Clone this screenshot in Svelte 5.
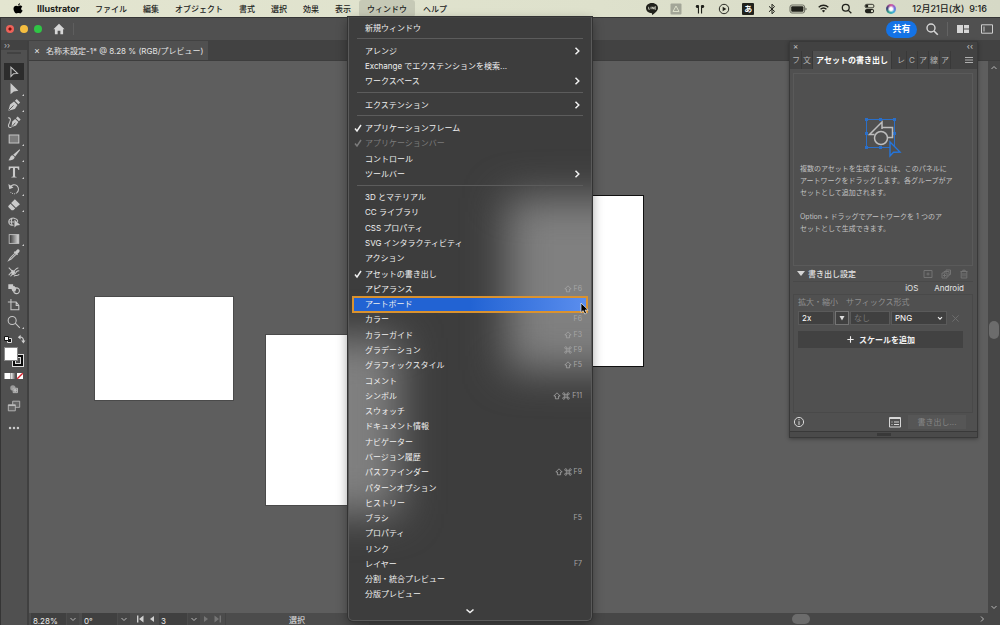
<script>
  const menuTitles = ['ファイル', '編集', 'オブジェクト', '書式', '選択', '効果', '表示', 'ウィンドウ', 'ヘルプ'];

  const groups = [
    [{ label: '新規ウィンドウ' }],
    [
      { label: 'アレンジ', sub: true },
      { label: 'Exchange でエクステンションを検索...' },
      { label: 'ワークスペース', sub: true },
    ],
    [{ label: 'エクステンション', sub: true }],
    [
      { label: 'アプリケーションフレーム', checked: true },
      { label: 'アプリケーションバー', checked: true, disabled: true },
      { label: 'コントロール' },
      { label: 'ツールバー', sub: true },
    ],
    [
      { label: '3D とマテリアル' },
      { label: 'CC ライブラリ' },
      { label: 'CSS プロパティ' },
      { label: 'SVG インタラクティビティ' },
      { label: 'アクション' },
      { label: 'アセットの書き出し', checked: true },
      { label: 'アピアランス', mods: ['shift'], key: 'F6' },
      { label: 'アートボード', active: true },
      { label: 'カラー', key: 'F6' },
      { label: 'カラーガイド', mods: ['shift'], key: 'F3' },
      { label: 'グラデーション', mods: ['cmd'], key: 'F9' },
      { label: 'グラフィックスタイル', mods: ['shift'], key: 'F5' },
      { label: 'コメント' },
      { label: 'シンボル', mods: ['shift', 'cmd'], key: 'F11' },
      { label: 'スウォッチ' },
      { label: 'ドキュメント情報' },
      { label: 'ナビゲーター' },
      { label: 'バージョン履歴' },
      { label: 'パスファインダー', mods: ['shift', 'cmd'], key: 'F9' },
      { label: 'パターンオプション' },
      { label: 'ヒストリー' },
      { label: 'ブラシ', key: 'F5' },
      { label: 'プロパティ' },
      { label: 'リンク' },
      { label: 'レイヤー', key: 'F7' },
      { label: '分割・統合プレビュー' },
      { label: '分版プレビュー' },
    ],
  ];

  const modPaths = {
    shift: 'M5 1 L9 5 H7 V8.5 H3 V5 H1 Z',
    cmd: 'M3.5 3.5 H6.5 V6.5 H3.5 Z M3.5 3.5 V2.2 A1.3 1.3 0 1 0 2.2 3.5 Z M6.5 3.5 V2.2 A1.3 1.3 0 1 1 7.8 3.5 Z M3.5 6.5 V7.8 A1.3 1.3 0 1 1 2.2 6.5 Z M6.5 6.5 V7.8 A1.3 1.3 0 1 0 7.8 6.5 Z',
  };

  // f = filled shape, s = stroked shape, on a 16 x 16 grid
  const tools = [
    { name: '選択', s: 'M4.5 2.5 V13 L7.5 10 L12 9.6 Z', selected: true },
    { name: 'ダイレクト選択', f: 'M4 1 V14 L7.8 10.8 L13 10 Z', more: true },
    { name: 'ペン', f: 'M1.5 14.5 L3.5 7.5 L8 4 L12 8 L9 12.5 Z M9 3.2 L11.2 1 L15 5 L13 7.2 Z', cut: 'M2 14 L7.5 8.5', more: true },
    { name: '曲線', f: 'M5 14 L6 7.5 L9.3 4.5 L13 8 L10.3 12 Z M10.2 3.6 L12.2 1.6 L15.6 5 L13.7 7 Z', s: 'M1.5 3 C5 3.5 4 6 3 8.5 C1 12 1 15 5 14', cut: 'M5.5 13.5 L9.5 8.8' },
    { name: '長方形', s: 'M2.5 3.5 H13.5 V12.5 H2.5 Z', box: true, more: true },
    { name: 'ブラシ', f: 'M14.4 1.4 L15 2.4 L9.4 9.8 L7 7.6 Z M6.4 8.2 L8.8 10.4 C8.4 13.6 5 14.6 1.4 14 C3.8 12.6 3 8.8 6.4 8.2 Z', more: true },
    { name: '文字', f: 'M2 1.8 H14 V5.6 H13 C12.6 3.7 12 3.4 9.2 3.4 V12.6 C9.2 13.4 9.7 13.6 11 13.6 V14.4 H5 V13.6 C6.3 13.6 6.8 13.4 6.8 12.6 V3.4 C4 3.4 3.4 3.7 3 5.6 H2 Z', more: true },
    { name: '回転', s: 'M3.5 6 C5 3 9 2.3 11.5 4.5 C14 7 13.5 10.5 11 12.5', dash: 'M11 12.5 C8.5 14.2 5 13.5 3.4 10.5', f: 'M1.6 2.4 L2.6 8.2 L7.4 6.2 Z', more: true },
    { name: '消しゴム', f: 'M9 1.5 L14.8 7 L10.2 11.2 L4.7 5.8 Z M4 6.6 L9.4 11.9 L7.2 14 H5.2 L1.5 10.4 V9 Z', more: true },
    { name: 'シェイプ形成', s: 'M2 8 C2 3.5 7 3 9 4 C12 4.5 12.5 7 12 8 M2 8 C2 11 5 12 7.5 11.6 M2 8 H8 M6 3.6 C4.5 6 4.8 9 6 11.6', f: 'M8.5 5 V14.4 L11 12 L15 11.4 Z' },
    { name: 'グラデーション', gradient: true, more: true },
    { name: 'スポイト', f: 'M9 4.5 L11.5 2 C13.2 0.6 15.4 2.8 14 4.5 L11.5 7 Z M7.6 4.8 L9 3.6 L12.6 7.2 L11.4 8.4 Z', s: 'M9 6 L3.6 11.4 L2 14.2 L4.8 12.6 L10.2 7.2' },
    { name: 'パペットワープ', s: 'M2 3 L6 7 M2 11.8 C5 7 7 8 8.5 6.5 C10 5 11 3 13 3.5 M4 13 C6 8.5 9 12 10 9 C11 7 13 6 14 7 M8 13 C9 10.5 12 13.5 14 10.5', f: 'M5.6 5.4 L9.6 7.6 L8 11 L4.4 9.4 Z' },
    { name: 'ブレンド', f: 'M1.5 2.5 H7 V8 H1.5 Z M4.6 6.5 L8 4.4 L10.8 7 L9.5 10.8 L6.2 10.6 Z', s: 'M14.2 10 A3.3 3.3 0 1 1 7.6 10 A3.3 3.3 0 1 1 14.2 10' },
    { name: 'アートボード', s: 'M4.5 1 V13.5 H13.5 V8.5 L10.5 4.5 H1 M10.5 4.5 V8.5 H13.5' },
    { name: 'ズーム', s: 'M10.5 6.3 A4.6 4.6 0 1 1 1.3 6.3 A4.6 4.6 0 1 1 10.5 6.3 M9.4 9.4 L14.6 14.6', more: true },
  ];

  let scale = $state('2x');
  let suffix = $state('');
  let format = $state('PNG');
  let zoom = $state('8.28%');
  let angle = $state('0°');
  let artboard = $state('3');
</script>

<svelte:head><title>Illustrator</title></svelte:head>

<div class="desktop">
  <header class="menubar">
    <svg class="apple" viewBox="0 0 12 13" aria-hidden="true">
      <path d="M8.4 0.3 C8.5 1.6 7.4 2.9 6.1 2.9 C6 1.6 7.1 0.4 8.4 0.3 Z M6.2 3.7 C6.8 3.7 7.6 3 8.7 3 C9.7 3 10.6 3.6 11.1 4.3 C9.1 5.4 9.4 8.3 11.5 9 C11 10.4 9.9 12.4 8.6 12.4 C7.7 12.4 7.4 11.9 6.3 11.9 C5.2 11.9 4.8 12.4 4 12.4 C2.4 12.4 0.6 9.2 0.6 6.8 C0.6 4.3 2.2 3.1 3.7 3.1 C4.8 3.1 5.5 3.7 6.2 3.7 Z" />
    </svg>
    <strong>Illustrator</strong>
    <nav>
      {#each menuTitles as title}
        <button class="title" class:open={title === 'ウィンドウ'}>{title}</button>
      {/each}
    </nav>
    <div class="extras">
      <svg viewBox="0 0 14 14"><path d="M7 1 C10.8 1 13 3.4 13 6 C13 8.8 9.6 11.5 7 13 V11.2 C3.4 11.2 1 9 1 6 C1 3.4 3.2 1 7 1 Z" /><path class="cut" d="M3.6 4.8 V7.2 H4.9 M6 4.8 V7.2 M7.2 7.2 V4.8 L8.7 7.2 V4.8 M11 4.8 H9.8 V7.2 H11 M9.8 6 H10.8" /></svg>
      <svg viewBox="0 0 14 14"><rect x="1.5" y="1.5" width="11" height="11" rx="1" fill="#a3a698" /><path d="M7 4 L10 9.5 H4 Z" fill="none" stroke="#dde0cb" /></svg>
      <svg viewBox="0 0 14 14"><path d="M3.4 3 H5 C6.2 3 6.3 4.2 6 5 V11.5 H4.9 V6 C3.4 6 2.7 5.4 2.7 4.5 Z M10.6 3 H9 C7.8 3 7.7 4.2 8 5 V11.5 H9.1 V6 C10.6 6 11.3 5.4 11.3 4.5 Z" /></svg>
      <svg viewBox="0 0 14 14"><circle cx="7" cy="7" r="4.7" fill="none" stroke="#2a2b25" /><path d="M5.7 4.8 L9.3 7 L5.7 9.2 Z" /></svg>
      <span class="ime"><b>あ</b></span>
      <svg viewBox="0 0 14 14"><path class="line" d="M4 4.3 L9.5 9.4 L7 11.8 V2.2 L9.5 4.7 L4 9.8" /></svg>
      <svg class="battery" viewBox="0 0 18 14"><rect x="1" y="3" width="14.6" height="8" rx="2" fill="none" stroke="#6c6e62" /><rect x="2.2" y="4.2" width="12.2" height="5.6" rx="1" /><path d="M16.6 5.6 V8.4 L17.6 7 Z" /></svg>
      <svg class="near" viewBox="0 0 14 14"><path class="line thick" d="M1.8 5.7 C4.8 2.8 9.2 2.8 12.2 5.7 M3.8 7.9 C5.7 6.2 8.3 6.2 10.2 7.9" /><path d="M5.3 9.4 C6.4 8.5 7.6 8.5 8.7 9.4 L7 11.2 Z" /></svg>
      <svg class="near" viewBox="0 0 14 14"><circle class="line thick" cx="6.2" cy="6.2" r="3.7" /><path class="line thick" d="M9 9 L12.2 12.2" /></svg>
      <svg class="near" viewBox="0 0 14 14"><rect x="2.2" y="2.5" width="9.6" height="3.8" rx="1.9" fill="none" stroke="#2a2b25" /><circle cx="4.2" cy="4.4" r="1.5" /><rect x="2" y="7.6" width="10" height="4.4" rx="2.2" /><circle cx="9.7" cy="9.8" r="1.3" fill="#dde0cb" /></svg>
      <span class="siri"></span>
      <time>12月21日(水)&nbsp; 9:16</time>
    </div>
  </header>

  <main class="app">
    <div class="appbar">
      <button class="light red" aria-label="閉じる"></button>
      <button class="light yellow" aria-label="しまう"></button>
      <button class="light green" aria-label="拡大"></button>
      <button class="home" aria-label="ホーム">
        <svg viewBox="0 0 14 14"><path d="M7 1 L13.5 7.4 H11.8 V13 H8.6 V9 H5.4 V13 H2.2 V7.4 H0.5 Z" /></svg>
      </button>
      <div class="appbar-right">
        <button class="share">共有</button>
        <button class="plain" aria-label="検索"><svg viewBox="0 0 14 14"><circle cx="6" cy="6" r="4" fill="none" stroke="#d6d6d6" stroke-width="1.4" /><path d="M9 9 L12.8 12.8" stroke="#d6d6d6" stroke-width="1.6" /></svg></button>
        <span class="divider"></span>
        <button class="plain" aria-label="ドキュメントの整列"><svg viewBox="0 0 14 14"><path d="M1 3 H7 V11 H1 Z M8 3 H13 V6.5 H8 Z M8 7.5 H13 V11 H8 Z" fill="#d6d6d6" /></svg></button>
        <button class="plain" aria-label="ワークスペース"><svg viewBox="0 0 14 14"><path d="M1.5 2.8 H12.5 V11.2 H1.5 Z" fill="none" stroke="#cfcfcf" /><path d="M3 4.5 H5 V9.5 H3 Z" fill="#8c8c8c" /></svg></button>
      </div>
    </div>

    <div class="work">
      <aside class="toolbar">
        <div class="collapse">››</div>
        <div class="grip"></div>
        <div class="tools">
          {#each tools as tool}
            <button class="tool" class:selected={tool.selected} class:more={tool.more} aria-label={tool.name}>
              <svg viewBox="0 0 16 16">
                {#if tool.gradient}
                  <defs><linearGradient id="ramp"><stop offset="0" stop-color="#333" /><stop offset="1" stop-color="#ddd" /></linearGradient></defs>
                  <rect x="2.5" y="3" width="11" height="10" fill="url(#ramp)" stroke="#c4c4c4" />
                {/if}
                {#if tool.f}<path class="f" d={tool.f} />{/if}
                {#if tool.s}<path class="s" class:box={tool.box} d={tool.s} />{/if}
                {#if tool.dash}<path class="s" stroke-dasharray="1 1.2" d={tool.dash} />{/if}
                {#if tool.cut}<path class="c" d={tool.cut} />{/if}
              </svg>
            </button>
          {/each}
        </div>
        <button class="swatches" aria-label="塗りと線">
          <svg viewBox="0 0 24 34">
            <path d="M5.5 4.5 H9.5 V8.5 H5.5 Z" fill="#111" stroke="#ddd" />
            <path d="M2.5 2.5 H6.5 V6.5 H2.5 Z" fill="#fff" stroke="#111" />
            <path d="M18 3 C20.5 3 21.5 4.5 21.5 7" fill="none" stroke="#ccc" stroke-width="1.2" /><path d="M15.8 3.2 L18.6 0.8 V5.6 Z M19.2 6.6 H23.4 L21.4 9.6 Z" fill="#ccc" />
            <rect x="10.5" y="20.5" width="11" height="12" fill="#0b0b0b" stroke="#ddd" />
            <rect x="13.5" y="23.5" width="5" height="6" fill="#4d4d4d" stroke="#ddd" />
            <rect x="2.5" y="13.5" width="13" height="13" fill="#fff" stroke="#888" />
          </svg>
        </button>
        <button class="modes" aria-label="カラーモード">
          <svg viewBox="0 0 20 8">
            <defs><linearGradient id="mode"><stop offset="0" stop-color="#eee" /><stop offset="1" stop-color="#444" /></linearGradient></defs>
            <rect x="0.5" y="1" width="6" height="6" fill="#fff" /><rect x="7" y="1" width="5" height="6" fill="url(#mode)" /><rect x="13" y="1" width="6" height="6" fill="#fff" /><path d="M13.2 6.8 L18.8 1.2" stroke="#d8202c" stroke-width="1.4" />
          </svg>
        </button>
        <button class="bottom-tool" aria-label="描画モード"><svg viewBox="0 0 16 16"><circle cx="6.7" cy="5.7" r="3" fill="#9a9a9a" /><path d="M7 6 H12 V11 H7 Z" fill="#777" stroke="#bbb" /><circle cx="9.4" cy="8.4" r="1.8" fill="#bbb" /></svg></button>
        <button class="bottom-tool screen" aria-label="スクリーンモード"><svg viewBox="0 0 16 16"><path d="M6.5 2.5 H14.5 V9.5 H6.5 Z" fill="#666" stroke="#bbb" /><path d="M1.5 6.5 H9.5 V13.5 H1.5 Z" fill="#666" stroke="#bbb" /><path d="M1.5 7.5 H9.5" stroke="#ccc" /></svg></button>
        <button class="bottom-tool dots" aria-label="ツールバーを編集"><svg viewBox="0 0 16 16"><circle cx="3.5" cy="8" r="1.4" /><circle cx="8" cy="8" r="1.4" /><circle cx="12.5" cy="8" r="1.4" /></svg></button>
      </aside>

      <section class="document">
        <div class="tabs">
          <button class="doc-tab"><span>×</span>名称未設定-1* @ 8.28 % (RGB/プレビュー)</button>
        </div>
        <div class="view">
          <div class="canvas">
            <div class="artboard one"></div>
            <div class="artboard two"></div>
            <div class="artboard three"></div>
          </div>
          <div class="vscroll">
            <svg viewBox="0 0 10 10"><path d="M2.5 6 L5 3.5 L7.5 6" /></svg>
            <span class="vthumb"></span>
            <svg viewBox="0 0 10 10"><path d="M2.5 4 L5 6.5 L7.5 4" /></svg>
          </div>
        </div>
        <footer class="status">
          <input class="zoom" aria-label="ズーム率" bind:value={zoom} />
          <button class="drop" aria-label="ズーム率を選択"><svg viewBox="0 0 10 10"><path d="M2.5 4 L5 6.5 L7.5 4" /></svg></button>
          <input class="angle" aria-label="回転角度" bind:value={angle} />
          <button class="drop" aria-label="角度を選択"><svg viewBox="0 0 10 10"><path d="M2.5 4 L5 6.5 L7.5 4" /></svg></button>
          <button class="step first" aria-label="最初"><svg viewBox="0 0 10 10"><path class="solid" d="M2 1.5 H3.4 V8.5 H2 Z M8.5 1.5 V8.5 L4 5 Z" /></svg></button>
          <button class="step" aria-label="前へ"><svg viewBox="0 0 10 10"><path class="solid" d="M7 2 V8 L3 5 Z" /></svg></button>
          <input class="number" aria-label="アートボード番号" bind:value={artboard} />
          <button class="drop" aria-label="アートボードを選択"><svg viewBox="0 0 10 10"><path d="M2.5 4 L5 6.5 L7.5 4" /></svg></button>
          <button class="step" aria-label="次へ" disabled><svg viewBox="0 0 10 10"><path class="solid" d="M3 2 V8 L7 5 Z" /></svg></button>
          <button class="step" aria-label="最後" disabled><svg viewBox="0 0 10 10"><path class="solid" d="M6.6 1.5 H8 V8.5 H6.6 Z M1.5 1.5 V8.5 L6 5 Z" /></svg></button>
          <span class="current">選択</span>
          <div class="hscroll"><span class="hthumb"></span><svg viewBox="0 0 10 10"><path d="M4 2.5 L6.5 5 L4 7.5" /></svg></div>
        </footer>
      </section>
    </div>
  </main>

  <section class="panel" aria-label="アセットの書き出し">
    <div class="panel-top"><button aria-label="閉じる">×</button><button aria-label="折りたたむ">‹‹</button></div>
    <div class="panel-tabs">
      <button>フ</button><button>文</button>
      <button class="current-tab">アセットの書き出し</button>
      <button>レ</button><button>C</button><button>ア</button><button>線</button><button>ア</button>
      <button class="burger" aria-label="パネルメニュー"><svg viewBox="0 0 10 10"><path d="M1 2.5 H9 M1 5 H9 M1 7.5 H9" /></svg></button>
    </div>
    <div class="drop-area">
      <svg viewBox="0 0 40 42" aria-hidden="true">
        <path d="M3.5 3.5 H31.5 V31.5 H3.5 Z" fill="none" stroke="#2a6fc9" />
        <path d="M2 2 h3 v3 h-3 Z M16 2 h3 v3 h-3 Z M30 2 h3 v3 h-3 Z M2 16 h3 v3 h-3 Z M30 16 h3 v3 h-3 Z M2 30 h3 v3 h-3 Z M16 30 h3 v3 h-3 Z" fill="#2a6fc9" />
        <path d="M19.5 11.5 H29.5 V21.5 H25 M11.5 18.5 H6.5 L19 6 V13" fill="none" stroke="#bdbdbd" stroke-width="1.5" />
        <circle cx="18" cy="22" r="6.5" fill="none" stroke="#bdbdbd" stroke-width="1.5" />
        <path d="M27 26 V40 L30.5 36.3 L37 36 Z" fill="#505050" stroke="#2476de" stroke-width="1.4" />
      </svg>
      <p>複数のアセットを生成するには、このパネルに<br />アートワークをドラッグします。各グループがア<br />セットとして追加されます。</p>
      <p>Option + ドラッグでアートワークを 1 つのア<br />セットとして生成できます。</p>
    </div>
    <div class="settings-title">
      <span class="twirl"></span>
      <span class="settings-name">書き出し設定</span>
      <svg viewBox="0 0 10 10"><path d="M1 1.5 H9 V8.5 H1 Z M5 3.5 V6.5 M3.5 5 H6.5" /></svg>
      <svg viewBox="0 0 10 10"><path d="M1 4 H6 V9 H1 Z M3 4 V2.5 H8 V7 H6 M3.5 5 V8 M2 6.5 H5 M5 2.5 V1 H9.5 V5.5 H8" /></svg>
      <svg viewBox="0 0 10 10"><path d="M1.5 2.5 H8.5 M3.8 2.5 V1.2 H6.2 V2.5 M2.2 2.5 V9 H7.8 V2.5 M4 4 V7.5 M6 4 V7.5" /></svg>
    </div>
    <div class="presets"><button>iOS</button><button>Android</button></div>
    <div class="settings">
      <div class="labels">
        <label class="scale-label" for="scale">拡大・縮小</label>
        <label for="suffix">サフィックス</label><label for="format">形式</label>
      </div>
      <div class="fields">
        <input id="scale" bind:value={scale} />
        <button class="scale-drop" aria-label="倍率を選択"><svg viewBox="0 0 10 10"><path d="M2.5 3 H7.5 L5 7.5 Z" /></svg></button>
        <input id="suffix" placeholder="なし" bind:value={suffix} />
        <div class="select">
          <select id="format" bind:value={format}>
            <option>PNG</option>
            <option>JPG</option>
            <option>SVG</option>
            <option>PDF</option>
          </select>
          <svg viewBox="0 0 10 10"><path d="M2.5 4 L5 6.5 L7.5 4" /></svg>
        </div>
        <button class="remove" aria-label="削除"><svg viewBox="0 0 10 10"><path d="M1.5 1.5 L8.5 8.5 M8.5 1.5 L1.5 8.5" /></svg></button>
      </div>
      <button class="add"><svg viewBox="0 0 10 10"><path d="M5 1.5 V8.5 M1.5 5 H8.5" /></svg>スケールを追加</button>
    </div>
    <div class="panel-foot">
      <svg class="info" viewBox="0 0 12 12"><circle cx="6" cy="6" r="4.6" /><path d="M6 5.2 V9 M6 3 V4.2" /></svg>
      <button class="list" aria-label="書き出しダイアログを開く"><svg viewBox="0 0 12 12"><path d="M0.5 1.5 H11.5 V11 H0.5 Z M0.5 2.5 H11.5 M2.5 6 H3.5 M5 6 H10 M2.5 8.5 H3.5 M5 8.5 H10" /></svg></button>
      <button class="export" disabled>書き出し...</button>
    </div>
    <div class="panel-grip"></div>
  </section>

  <div class="menu" role="menu">
    <span class="glow right"></span>
    <span class="glow left"></span>
    {#each groups as group, i}
      {#if i > 0}<div class="rule"></div>{/if}
      {#each group as item}
        <button class="item" class:active={item.active} disabled={item.disabled} role="menuitem">
          <span class="check">
            {#if item.checked}<svg viewBox="0 0 10 10"><path d="M2 5.5 L4 8 L8 2" /></svg>{/if}
          </span>
          <span class="label">{item.label}</span>
          {#if item.sub}<svg class="arrow" viewBox="0 0 10 10"><path d="M3.5 1.8 L6.8 5 L3.5 8.2" /></svg>{/if}
          {#if item.key}
            <span class="keys">
              {#each item.mods ?? [] as mod}<svg viewBox="0 0 10 10"><path d={modPaths[mod]} /></svg>{/each}
              <span>{item.key}</span>
            </span>
          {/if}
        </button>
      {/each}
    {/each}
    <div class="scroll-down"><svg viewBox="0 0 10 10"><path d="M1.5 3.5 L5 6.5 L8.5 3.5" /></svg></div>
  </div>

  <svg class="cursor" viewBox="0 0 10 14" aria-hidden="true"><path d="M1 1 V10.5 L3.2 8.6 L4.8 12 L6.6 11.2 L5.1 8 H8.2 Z" /></svg>
</div>

<style>
  :global(body) {
    margin: 0;
    background: #2b2b2b;
  }

  .desktop {
    position: relative;
    display: flex;
    flex-direction: column;
    height: 100vh;
    overflow: hidden;
    font-family: Inter, 'Noto Sans CJK JP', sans-serif;
    font-size: 8px;
    line-height: 12px;
    color: #e4e4e4;
  }

  button,
  input,
  select {
    margin: 0;
    padding: 0;
    border: 0;
    border-radius: 0;
    background: none;
    font: inherit;
    color: inherit;
    box-sizing: border-box;
  }

  svg {
    display: block;
    flex: none;
  }

  /* macOS menu bar */
  .menubar {
    display: flex;
    align-items: center;
    flex: none;
    height: 17px;
    padding: 0 13px;
    background: linear-gradient(90deg, #e3e5d0, #dee1cc 60%, #d6d9c6);
    color: #20211b;
    font-weight: 500;
  }

  .apple {
    width: 10px;
    height: 11px;
    margin-right: 14px;
  }

  .menubar strong {
    width: 50px;
    font-size: 9px;
    font-weight: 700;
  }

  nav {
    display: flex;
    height: 100%;
  }

  .title {
    padding: 0 8px;
    border-radius: 3px;
    white-space: nowrap;
  }

  .title.open {
    background: #c6c9b6;
  }

  .extras {
    display: flex;
    align-items: center;
    margin-left: auto;
  }

  .extras svg {
    width: 14px;
    height: 14px;
    margin: 0 5px;
    fill: #20211b;
  }

  .extras .battery {
    width: 18px;
  }

  .extras .near {
    width: 13px;
    height: 13px;
  }

  .extras .line {
    fill: none;
    stroke: #20211b;
  }

  .extras .thick {
    stroke-width: 1.4;
  }

  .cut {
    fill: none;
    stroke: #e8ead8;
    stroke-width: 0.7;
  }

  .ime {
    width: 12px;
    height: 12px;
    margin: 0 6px;
    border-radius: 1px;
    background: #20211b;
    color: #fff;
    line-height: 12px;
    text-align: center;
  }

  .siri {
    width: 10px;
    height: 10px;
    margin: 0 16px 0 5px;
    border-radius: 50%;
    background: radial-gradient(#fff 20%, transparent 50%), conic-gradient(#d65ea0, #7b6be0, #3fb3d8, #31a38c, #423c78, #d65ea0);
  }

  time {
    font-size: 9px;
    white-space: nowrap;
  }

  /* application frame */
  .app {
    display: flex;
    flex-direction: column;
    flex: 1;
    min-height: 0;
    border: 1px solid #353535;
    border-width: 1px 0 0 1px;
    background: #505050;
  }

  .appbar {
    display: flex;
    align-items: center;
    flex: none;
    height: 23px;
    padding: 0 6px 0 5px;
    border-bottom: 1px solid #424242;
    box-sizing: border-box;
  }

  .light {
    width: 8px;
    height: 8px;
    margin-right: 6px;
    border-radius: 50%;
  }

  .red {
    background: radial-gradient(#7a0f0b 20%, #ee6259 35%);
  }

  .yellow {
    background: #f6be40;
  }

  .green {
    background: #2fc545;
  }

  .home {
    padding: 0 8px 0 5px;
    border-right: 1px solid #5e5e5e;
  }

  .home svg {
    width: 12px;
    height: 12px;
    fill: #d6d6d6;
  }

  .appbar-right {
    display: flex;
    align-items: center;
    gap: 8px;
    margin-left: auto;
  }

  .share {
    width: 31px;
    height: 17px;
    border-radius: 9px;
    background: #1473e6;
    color: #fff;
    font-size: 9px;
    font-weight: 700;
  }

  .plain svg {
    width: 14px;
    height: 14px;
  }

  .divider {
    width: 1px;
    height: 14px;
    background: #636363;
  }

  .plain:last-child {
    margin-left: 2px;
  }

  .work {
    display: flex;
    flex: 1;
    min-height: 0;
  }

  /* tools */
  .toolbar {
    display: flex;
    flex-direction: column;
    align-items: center;
    flex: none;
    width: 28px;
    border-right: 2px solid #404040;
    box-sizing: border-box;
  }

  .collapse {
    align-self: stretch;
    height: 9px;
    padding-left: 3px;
    background: #424242;
    color: #bbb;
    line-height: 8px;
  }

  .grip {
    width: 14px;
    height: 2px;
    margin: 2px 0 9px;
    background: #424242;
  }

  .tools {
    display: grid;
    grid-auto-rows: 17px 17px 16px;
  }

  .tool {
    position: relative;
    display: flex;
    align-items: center;
    justify-content: center;
    width: 20px;
  }

  .tool.selected {
    background: #2c2c2c;
  }

  .tool svg,
  .bottom-tool svg {
    width: 14px;
    height: 14px;
  }

  .tool.more::after {
    content: '';
    position: absolute;
    right: 0;
    bottom: 1px;
    border: 1px solid #d0d0d0;
    border-top-color: transparent;
    border-left-color: transparent;
  }

  .f {
    fill: #cacaca;
  }

  .s {
    fill: none;
    stroke: #c6c6c6;
    stroke-width: 1.2;
  }

  .s.box {
    fill: #7c7c7c;
  }

  .c {
    stroke: #505050;
  }

  .swatches {
    margin-top: 4px;
  }

  .swatches svg {
    width: 24px;
    height: 34px;
  }

  .modes {
    margin: 4px 0 3px;
  }

  .modes svg {
    width: 20px;
    height: 8px;
  }

  .bottom-tool.screen {
    margin-top: 2px;
  }

  .bottom-tool.dots {
    margin-top: 8px;
  }

  .dots svg {
    fill: #cacaca;
  }

  /* document window */
  .document {
    display: flex;
    flex-direction: column;
    flex: 1;
    min-width: 0;
  }

  .tabs {
    flex: none;
    height: 20px;
    border-bottom: 1px solid #3d3d3d;
    background: #424242;
    box-sizing: border-box;
  }

  .doc-tab {
    height: 19px;
    padding: 0 5px;
    background: #505050;
    white-space: nowrap;
  }

  .doc-tab span {
    margin-right: 6px;
    font-size: 9px;
  }

  .view {
    display: flex;
    flex: 1;
    min-height: 0;
  }

  .canvas {
    position: relative;
    flex: 1;
    overflow: hidden;
    background: #5e5e5e;
  }

  .artboard {
    position: absolute;
    background: #fff;
    box-shadow: 0 0 0 1px #4a4a4a;
  }

  .one {
    top: 236px;
    left: 66px;
    width: 138px;
    height: 103px;
  }

  .two {
    top: 274px;
    left: 237px;
    width: 120px;
    height: 170px;
  }

  .three {
    top: 135px;
    left: 494px;
    width: 120px;
    height: 170px;
    box-shadow: 0 0 0 1px #111;
  }

  .vscroll {
    display: flex;
    flex-direction: column;
    align-items: center;
    justify-content: space-between;
    width: 12px;
    padding: 2px 0 1px;
    background: #474747;
    box-sizing: border-box;
  }

  .vscroll svg,
  .hscroll svg,
  .drop svg,
  .step svg {
    width: 10px;
    height: 10px;
    fill: none;
    stroke: #b8b8b8;
  }

  .vthumb {
    width: 10px;
    height: 18px;
    margin-bottom: 16px;
    border-radius: 5px;
    background: #6c6c6c;
  }

  .status {
    display: flex;
    flex: none;
    gap: 1px;
    height: 12px;
    padding-left: 2px;
    background: #4c4c4c;
  }

  .status input {
    height: 16px;
    padding-left: 2px;
    background: #404040;
    color: #eee;
  }

  .zoom {
    width: 35px;
  }

  .angle {
    width: 35px;
    margin-left: 2px;
  }

  .number {
    width: 28px;
  }

  .drop {
    width: 12px;
    padding-left: 1px;
    background: #454545;
  }

  .step {
    width: 11px;
  }

  .step.first {
    margin-left: 4px;
  }

  .step .solid {
    fill: #d0d0d0;
    stroke: none;
  }

  .step:disabled .solid {
    fill: #757575;
  }

  .current {
    width: 142px;
    padding-top: 1px;
    border-left: 1px solid #444;
    text-align: center;
  }

  .hscroll {
    display: flex;
    align-items: center;
    flex: 1;
    padding-right: 13px;
    background: #474747;
  }

  .hthumb {
    width: 18px;
    height: 10px;
    margin: 0 167px 0 auto;
    border-radius: 5px;
    background: #6c6c6c;
  }

  /* floating panel */
  .panel {
    position: absolute;
    top: 41px;
    right: 22px;
    width: 189px;
    border: 1px solid #393939;
    background: #505050;
    box-sizing: border-box;
    box-shadow: 0 1px 4px rgba(0, 0, 0, 0.35);
  }

  .panel-top {
    display: flex;
    justify-content: space-between;
    height: 9px;
    padding: 0 4px 0 3px;
    background: #424242;
    color: #ccc;
    line-height: 9px;
  }

  .panel-tabs {
    display: flex;
    height: 18px;
    padding-left: 1px;
    background: #424242;
    color: #b4b4b4;
  }

  .panel-tabs button {
    width: 11px;
    border-right: 1px solid #393939;
    overflow: hidden;
  }

  .panel-tabs .current-tab {
    width: 79px;
    margin-right: 4px;
    background: #505050;
    color: #fff;
    font-weight: 600;
  }

  .panel-tabs .burger {
    width: 10px;
    margin: 0 3px 0 auto;
    border: 0;
  }

  .burger svg {
    width: 10px;
    height: 10px;
    stroke: #b0b0b0;
  }

  .drop-area {
    display: flex;
    flex-direction: column;
    gap: 12px;
    margin: 4px 4px 0 3px;
    padding: 42px 0 30px 6px;
    border: 1px solid #5a5a5a;
    color: #c2c2c2;
  }

  .drop-area svg {
    width: 40px;
    height: 42px;
    margin-left: 63px;
    margin-bottom: -7px;
  }

  .drop-area p {
    margin: 0;
    font-size: 7px;
    white-space: nowrap;
  }

  .settings-title {
    display: flex;
    align-items: center;
    gap: 8px;
    height: 16px;
    margin: 0 4px 0 3px;
    padding: 0 4px;
    border-bottom: 1px solid #494949;
    box-sizing: border-box;
  }

  .settings-title svg {
    width: 10px;
    height: 10px;
    fill: none;
    stroke: #737373;
  }

  .twirl {
    border: 4px solid transparent;
    border-top: 5px solid #d6d6d6;
    border-bottom: 0;
  }

  .settings-name {
    flex: 1;
    margin-left: -5px;
    font-weight: 500;
  }

  .presets {
    display: flex;
    justify-content: flex-end;
    gap: 16px;
    height: 12px;
    padding-right: 13px;
  }

  .settings {
    height: 119px;
    margin: 0 4px 0 3px;
    padding: 1px 0 0 4px;
    border: 1px solid #494949;
    box-sizing: border-box;
  }

  .labels {
    display: flex;
    color: #8f8f8f;
  }

  .scale-label {
    width: 48px;
  }

  .fields {
    display: flex;
    gap: 1px;
    height: 14px;
    margin: 3px 0 6px;
  }

  .fields input {
    height: 14px;
    padding: 0 3px;
    border: 1px solid #5a5a5a;
    background: #404040;
    color: #fff;
  }

  #scale {
    width: 36px;
  }

  .scale-drop {
    width: 14px;
    border: 1px solid #747474;
    background: #404040;
  }

  .scale-drop svg {
    width: 10px;
    height: 10px;
    margin: 0 auto;
    fill: #ddd;
  }

  #suffix {
    width: 40px;
  }

  #suffix::placeholder {
    color: #777;
  }

  .select {
    display: flex;
    align-items: center;
    width: 56px;
    padding-right: 2px;
    border: 1px solid #5a5a5a;
    background: #404040;
    box-sizing: border-box;
  }

  select {
    flex: 1;
    min-width: 0;
    padding-left: 3px;
    appearance: none;
    color: #fff;
  }

  .select svg {
    width: 8px;
    height: 8px;
    fill: none;
    stroke: #eee;
    stroke-width: 1.4;
  }

  .remove {
    margin-left: 3px;
  }

  .remove svg {
    width: 9px;
    height: 9px;
    stroke: #707070;
  }

  .add {
    display: flex;
    align-items: center;
    justify-content: center;
    gap: 4px;
    width: 165px;
    height: 17px;
    background: #424242;
    color: #f2f2f2;
    font-weight: 700;
  }

  .add svg {
    width: 9px;
    height: 9px;
    stroke: #eee;
    stroke-width: 1.2;
  }

  .panel-foot {
    display: flex;
    align-items: center;
    height: 18px;
    padding: 0 11px 0 3px;
  }

  .panel-foot svg {
    width: 12px;
    height: 12px;
    fill: none;
    stroke: #d6d6d6;
  }

  .list {
    margin: 0 7px 0 auto;
  }

  .export {
    width: 58px;
    height: 14px;
    background: #565656;
    color: #858585;
  }

  .panel-grip {
    height: 5px;
    border-top: 1px solid #393939;
    background: linear-gradient(#393939, #393939) center / 14px 3px no-repeat #4a4a4a;
  }

  /* open window menu */
  .menu {
    position: absolute;
    top: 17px;
    bottom: 4px;
    left: 348px;
    display: flex;
    flex-direction: column;
    width: 244px;
    padding: 2px 4px 0;
    border: 1px solid #5a5a5a;
    border-top-color: #444;
    border-radius: 0 0 5px 5px;
    background: #3d3d3d;
    box-sizing: border-box;
    box-shadow: 0 0 0 1px #333, 0 4px 12px rgba(0, 0, 0, 0.4);
    overflow: hidden;
  }

  .glow {
    position: absolute;
    background: #808080;
    filter: blur(20px);
  }

  .glow.right {
    top: 180px;
    left: 158px;
    width: 140px;
    height: 172px;
  }

  .glow.left {
    top: 320px;
    left: -70px;
    width: 120px;
    height: 176px;
  }

  .item {
    position: relative;
    display: flex;
    align-items: center;
    flex: 1 1 15px;
    min-height: 0;
    padding-right: 5px;
    color: #f0f0f0;
    font-weight: 400;
    text-align: left;
    white-space: nowrap;
  }

  .item:disabled {
    color: #7b7b7b;
  }

  .item.active {
    outline: 2px solid #d9922f;
    outline-offset: -1px;
    background: linear-gradient(90deg, #2263d3 50%, #5b8eee);
  }

  .item svg {
    width: 10px;
    height: 10px;
    fill: none;
    stroke: currentColor;
    stroke-width: 1.5;
  }

  .check {
    width: 11px;
  }

  .label {
    flex: 1;
    padding-left: 1px;
  }

  .keys {
    display: flex;
    align-items: center;
    gap: 1px;
    color: #a6a6a6;
    font-size: 7px;
  }

  .keys span {
    padding-left: 1px;
  }

  .keys svg {
    width: 8px;
    height: 8px;
    stroke-width: 1;
  }

  .rule {
    position: relative;
    flex: none;
    height: 1px;
    margin: 3px 4px 4px;
    background: #5c5c5c;
  }

  .scroll-down {
    display: flex;
    align-items: center;
    justify-content: center;
    flex: none;
    height: 18px;
  }

  .scroll-down svg {
    width: 10px;
    height: 10px;
    fill: none;
    stroke: #eee;
    stroke-width: 1.6;
  }

  .cursor {
    position: absolute;
    top: 302px;
    left: 580px;
    width: 10px;
    height: 14px;
    fill: #000;
    stroke: #eee;
    stroke-width: 0.7;
  }
</style>
